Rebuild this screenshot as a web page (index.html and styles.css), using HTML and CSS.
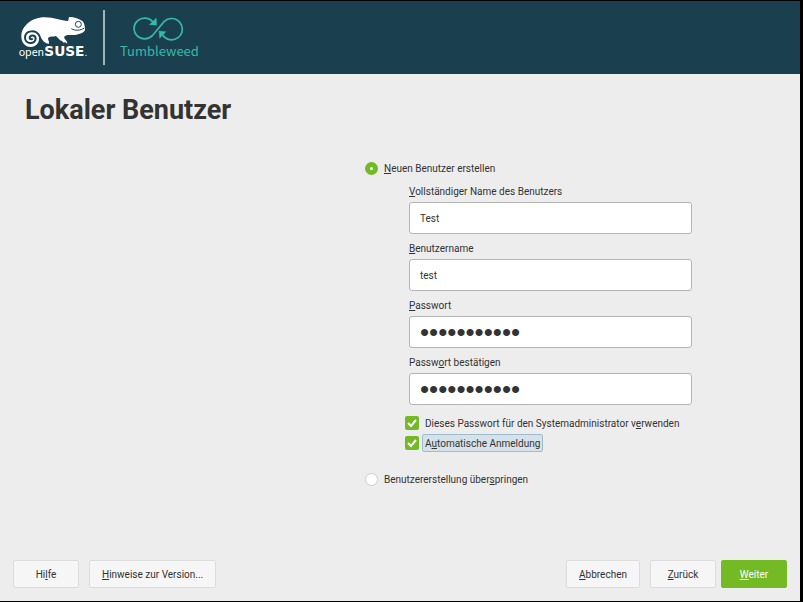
FILE: index.html
```html
<!DOCTYPE html>
<html lang="de">
<head>
  <meta charset="UTF-8">
  <meta name="viewport" content="width=device-width, initial-scale=1.0">
  <title>Lokaler Benutzer</title>
  <link rel="stylesheet" href="styles.css">
</head>
<body>

  <header class="banner">
    <svg class="logo-suse" viewBox="48 42 216 138" role="img" aria-label="openSUSE">
      <path class="body" d="M92 138 C76 138 64 126 64 106 C64 78 92 49 134 49 C164 49 184 60 203 60 C208 59 204 51 208 48 C222 48 240 54 248 61 C253 67 256 79 255 88 C247 99 230 103 212 102 C204 101 196 102 193 107 C190 114 202 116 202 128 L196 124 L191 125 L186 120 C177 118 175 110 168 105 C161 108 150 105 145 110 C142 115 148 119 147 128 C136 128 127 119 122 107 C118 100 114 102 117 109 C119 126 108 138 92 138 Z"/>
      <path class="spiral" d="M119 106 C110 86 76 85 75 110 C75 130 106 132 107 113 C106 101 89 101 89 111 C90 116 96 116 98 112"/>
      <circle class="eye" cx="235" cy="70" r="9"/>
      <circle class="pupil" cx="236" cy="70" r="4"/>
      <path class="mouth" d="M214 83 C226 90 241 89 253 81"/>
      <text class="open" x="56" y="164">open</text>
      <text class="suse" x="133" y="165">SUSE</text>
      <circle class="dot" cx="258" cy="163" r="2"/>
    </svg>
    <div class="divider"></div>
    <div class="product">
      <svg class="loop" viewBox="0 0 156 78" role="img" aria-label="Tumbleweed">
        <path d="M60 21 A32 31 0 1 0 58 62 L93 20 A32 32 0 1 1 89 60"/>
        <path class="tip" d="M70 9 L71 31 L49 29 Z M78 48 L99 50 L80 70 Z"/>
      </svg>
      <span>Tumbleweed</span>
    </div>
  </header>

  <main class="content">
    <h1>Lokaler Benutzer</h1>

    <form class="user-form" id="user_form">
      <div class="choice">
        <input type="radio" name="mode" id="mode_new" checked>
        <label for="mode_new"><u>N</u>euen Benutzer erstellen</label>
      </div>

      <div class="fields">
        <label for="full_name"><u>V</u>ollständiger Name des Benutzers</label>
        <input type="text" id="full_name" value="Test">

        <label for="user_name"><u>B</u>enutzername</label>
        <input type="text" id="user_name" value="test">

        <label for="password"><u>P</u>asswort</label>
        <input type="password" id="password" value="testtest123">

        <label for="password_repeat">Passw<u>o</u>rt bestätigen</label>
        <input type="password" id="password_repeat" value="testtest123">
      </div>

      <div class="checks">
        <div class="check">
          <input type="checkbox" id="use_for_root" checked>
          <label for="use_for_root">Dieses Passwort für den Systemadministrator v<u>e</u>rwenden</label>
        </div>
        <div class="check">
          <input type="checkbox" id="autologin" checked>
          <label class="focused" for="autologin">A<u>u</u>tomatische Anmeldung</label>
        </div>
      </div>

      <div class="choice">
        <input type="radio" name="mode" id="mode_skip">
        <label for="mode_skip">Benutzererstellung über<u>s</u>pringen</label>
      </div>
    </form>
  </main>

  <footer class="buttons">
    <button type="button">Hi<u>l</u>fe</button>
    <button type="button"><u>H</u>inweise zur Version...</button>
    <button type="button" class="abort"><u>A</u>bbrechen</button>
    <button type="button" class="back"><u>Z</u>urück</button>
    <button type="submit" form="user_form" class="next"><u>W</u>eiter</button>
  </footer>

</body>
</html>
```
FILE: styles.css
```css
* {
  box-sizing: border-box;
}

body {
  font-family: Roboto, "Liberation Sans", sans-serif;
  font-size: 10px;
  line-height: 14px;
  color: #333;
  background-color: #ededed;
  margin: 0;
  min-height: 100vh;
  border: solid #000;
  border-width: 1px 3px 1px 0;
  display: flex;
  flex-direction: column;
}

u {
  text-underline-offset: 1px;
  text-decoration-skip-ink: none;
}

.banner {
  height: 73px;
  background-color: #1a4050;
  display: flex;
  align-items: center;
  padding-left: 16px;
}

.logo-suse {
  width: 72px;
  height: 46px;
}

.logo-suse .body,
.logo-suse text,
.logo-suse .pupil,
.logo-suse .dot {
  fill: #fff;
}

.logo-suse .spiral,
.logo-suse .eye,
.logo-suse .mouth {
  fill: none;
  stroke: #1a4050;
  stroke-width: 3px;
}

.logo-suse .spiral {
  stroke-width: 6px;
}

.logo-suse .open {
  font: 32px "Noto Sans CJK SC", sans-serif;
}

.logo-suse .suse {
  font: bold 41px "DejaVu Sans", sans-serif;
}

.divider {
  width: 2px;
  height: 55px;
  margin-left: 15px;
  background-color: #a3b3b9;
}

.product {
  margin-left: 15px;
  display: flex;
  flex-direction: column;
  align-items: center;
  font: 13px/20px "Noto Sans CJK SC", sans-serif;
  color: #35b9ab;
}

.loop {
  width: 52px;
  height: 26px;
}

.loop path {
  fill: none;
  stroke: #35b9ab;
  stroke-width: 5px;
}

.loop .tip {
  fill: #35b9ab;
  stroke-width: 1px;
}

.content {
  flex: 1;
  padding: 19px 25px 0;
}

h1 {
  margin: 0;
  font-size: 27px;
  line-height: 34px;
}

.user-form {
  margin: 34px 83px 0 340px;
}

.choice,
.check {
  display: flex;
  align-items: center;
}

.choice label {
  margin-left: 6px;
  padding-top: 1px;
}

.fields {
  display: flex;
  flex-direction: column;
  margin: 9px 0 0 44px;
}

.fields label {
  margin-bottom: 3px;
}

.fields input {
  width: 100%;
  height: 32px;
  padding: 0 10px;
  margin-bottom: 8px;
  border: 1px solid #b4b4b4;
  border-radius: 3px;
  background-color: #fff;
  font: inherit;
  color: #333;
}

.fields input[type="password"] {
  font-family: "Liberation Sans", sans-serif;
  font-size: 26px;
}

input[type="radio"],
input[type="checkbox"] {
  appearance: none;
  margin: 0;
  flex: none;
}

input[type="radio"] {
  width: 13px;
  height: 13px;
  border: 1px solid #ccc;
  border-radius: 50%;
  background-color: #fff;
}

input[type="radio"]:checked {
  border: 5px solid #73ba25;
}

input[type="checkbox"] {
  width: 14px;
  height: 14px;
  border-radius: 2px;
  background-color: #fff;
}

input[type="checkbox"]:checked {
  background: #73ba25 url("data:image/svg+xml,%3Csvg xmlns='http://www.w3.org/2000/svg' viewBox='0 0 14 14'%3E%3Cpath d='M3 7l3 3 5-6' fill='none' stroke='white' stroke-width='2'/%3E%3C/svg%3E");
}

.checks {
  margin: 0 0 19px 40px;
}

.check {
  height: 20px;
}

.check label {
  margin-left: 3px;
  padding: 2px 2px 0;
  border: 1px solid transparent;
  border-radius: 2px;
}

.check .focused {
  border-color: #9dbdce;
  background-color: #d5e2ea;
}

.buttons {
  display: flex;
  padding: 0 13px;
  margin-bottom: 13px;
}

button {
  min-width: 66px;
  height: 28px;
  padding: 2px 12px 0;
  border: 1px solid #dcdcdc;
  border-radius: 2px;
  background-color: #f6f6f6;
  font: inherit;
  color: #333;
  cursor: pointer;
}

button + button {
  margin-left: 10px;
}

.buttons .abort {
  margin-left: auto;
}

.buttons .next {
  margin-left: 5px;
  border-color: #73ba25;
  background-color: #73ba25;
  color: #fff;
}
```
